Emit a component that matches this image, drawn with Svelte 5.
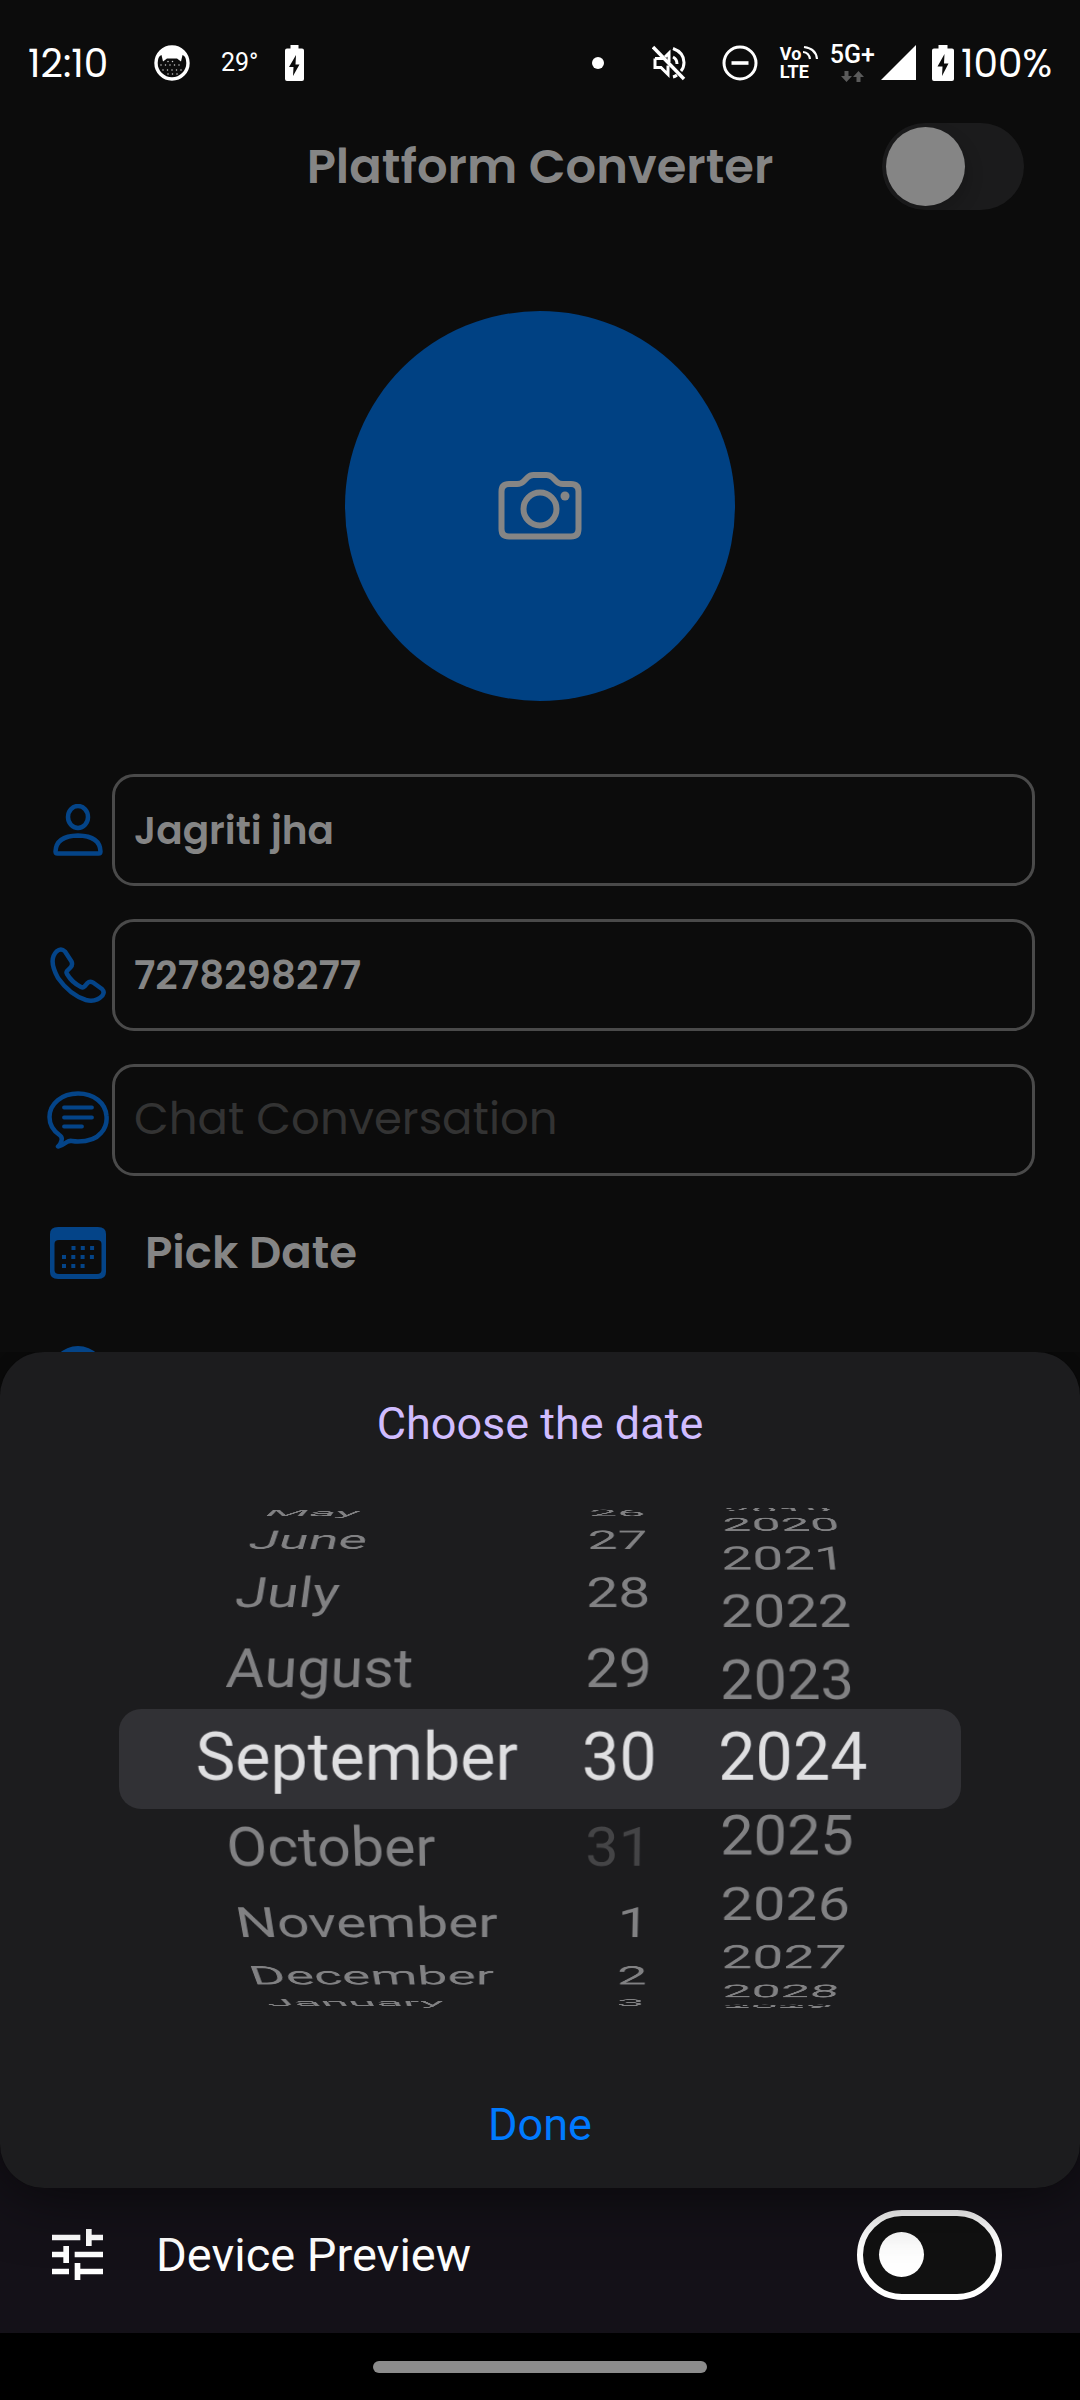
<script>
  let name = $state('Jagriti jha');
  let phone = $state('7278298277');
  let chat = $state('');
  let cupertino = $state(false);
  let preview = $state(false);

  const around = (labels, selected) =>
    labels.map((label, i) => ({ label, k: i - selected }));

  const wheels = [
    {
      id: 'month',
      step: 16.2,
      items: around(
        ['May', 'June', 'July', 'August', 'September', 'October', 'November', 'December', 'January'],
        4
      )
    },
    {
      id: 'day',
      step: 16.2,
      disabled: '31',
      items: around(['26', '27', '28', '29', '30', '31', '1', '2', '3'], 4)
    },
    {
      id: 'year',
      step: 14,
      items: around(
        ['2019', '2020', '2021', '2022', '2023', '2024', '2025', '2026', '2027', '2028', '2029'],
        5
      )
    }
  ];
</script>

<div class="device">
  <div class="stage">
    <div class="screen">
      <div class="status">
        <span class="time">12:10</span>
        <svg class="cat" width="36" height="36" viewBox="0 0 36 36">
          <circle cx="18" cy="18" r="16" fill="none" stroke="#fff" stroke-width="3.4" />
          <path fill="#fff" d="M4 12C6 5 11 2 18 2s12 3 14 10l-3.500-2-1.500 6.500-4-3h-10l-4 3L7.500 10z" />
          <path
            fill="none" stroke="#ccc" stroke-width="1.500" stroke-linecap="round" stroke-dasharray="0 4.500"
            d="M7 20h22M9 25h19M14 29h10M14 16.500h9"
          />
        </svg>
        <span class="temp">29°</span>
        <svg width="19" height="36" viewBox="0 0 19 36">
          <path fill="#fff" fill-rule="evenodd" d="M5.500 0h8v3.500H17q2 0 2 2V34q0 2-2 2H2q-2 0-2-2V5.500q0-2 2-2h3.500zM11 10 4 22h4.500L8 31l6.500-11.500H10.500z" />
        </svg>
        <span class="spacer"></span>
        <svg class="dot" width="12" height="12" viewBox="0 0 12 12"><circle cx="6" cy="6" r="6" fill="#fff" /></svg>
        <svg class="mute" width="34" height="36" viewBox="0 0 34 36" fill="none" stroke="#fff">
          <path stroke-width="3" d="M3 13.500v9h6l7 7v-9" />
          <path stroke-width="3" d="M3 13.500h9M17 17V8l-4 4M21 12q4 2 4 7M21 3.500q11 4 11 14 0 5-3 8.500M21 32q2-.5 4-2" />
          <path stroke-width="3.400" d="M1 2l31 32" />
        </svg>
        <svg class="dnd" width="36" height="36" viewBox="0 0 36 36" fill="none" stroke="#fff" stroke-width="3">
          <circle cx="18" cy="18" r="16" />
          <path stroke-width="3.600" d="M9.500 18h17" />
        </svg>
        <div class="volte">
          <div class="vo">
            Vo
            <svg width="16" height="15" viewBox="0 0 16 15" fill="none" stroke="#fff" stroke-width="2.200">
              <path d="M0 7q6 .5 7 7M1 2q12 1.500 13 12" />
            </svg>
          </div>
          <div>LTE</div>
        </div>
        <div class="net">
          <span>5G+</span>
          <svg width="23" height="11" viewBox="0 0 23 11" fill="#5a5a5a">
            <path d="M3.500 0h4v5h3.500L5.500 11 0 5h3.500zM15.500 11h4V6H23L17.500 0 12 6h3.500z" />
          </svg>
        </div>
        <svg class="signal" width="35" height="35" viewBox="0 0 35 35"><path fill="#fff" d="M35 0v35H0z" /></svg>
        <svg class="battery" width="22" height="36" viewBox="0 0 22 36">
          <path fill="#fff" fill-rule="evenodd" d="M6.500 0h9v3.500H20q2 0 2 2V34q0 2-2 2H2q-2 0-2-2V5.500q0-2 2-2h4.500zM12.500 9 5.500 21.500h5L10 31l6.500-12.500H12z" />
        </svg>
        <span class="percent">100%</span>
      </div>

      <header>
        <h1>Platform Converter</h1>
        <input class="ios-switch" type="checkbox" role="switch" aria-label="Platform" bind:checked={cupertino} />
      </header>

      <button class="photo" aria-label="Add photo">
        <svg width="84" height="68" viewBox="0 0 84 68" fill="none" stroke="#858585" stroke-width="6">
          <path stroke-linejoin="round" d="M11 12h8q4 0 6.500-2.500l4-4Q32 3 35.500 3h13Q52 3 54.500 5.500l4 4Q61 12 65 12h8q7.500 0 7.500 7.500V57q0 7.500-7.500 7.500H11q-7.500 0-7.500-7.500V19.500Q3.500 12 11 12z" />
          <circle cx="42" cy="37" r="16.500" />
          <circle cx="67" cy="24" r="4.500" fill="#858585" stroke="none" />
        </svg>
      </button>

      <form>
        <div class="row">
          <label for="name" aria-label="Full name">
            <svg width="50" height="52" viewBox="0 0 50 52" fill="none" stroke="#044488" stroke-width="4.500">
              <ellipse cx="25" cy="13" rx="10" ry="11" />
              <path stroke-linejoin="round" d="M4.500 49.500Q2.500 49.500 2.500 47.500 3 32 25 31.500 47 32 47.500 47.500 47.500 49.500 45.500 49.500z" />
            </svg>
          </label>
          <input id="name" type="text" bind:value={name} />
        </div>
        <div class="row">
          <label for="phone" aria-label="Phone number">
            <svg width="56" height="56" viewBox="0 0 56 56" fill="none" stroke="#044488" stroke-width="4.500" stroke-linejoin="round">
              <path d="M6.500 4.500Q11 .5 15 4.500L21.500 14.500Q23 18 20.500 20.500L17 24Q16 25.500 17 27 22 35.500 31 40 33 41 34.500 39.500L37.500 36Q39.500 34 43 35.500L52 42Q55 45 52.500 48.500 46 55.500 36 53 20 48 8 31-2 13 6.500 4.500z" />
            </svg>
          </label>
          <input id="phone" type="tel" bind:value={phone} />
        </div>
        <div class="row">
          <label for="chat" aria-label="Chat conversation">
            <svg width="62" height="58" viewBox="0 0 62 58" fill="none" stroke="#044488" stroke-width="4.500">
              <path stroke-linejoin="round" d="M31 2.500C15 2.500 2.500 12.500 2.500 26q0 11 10 18 3 2 2 5.500-.5 3-3.500 6 5-1.500 9-4.500 2-1.500 5-1 3 .5 6 .5 16 0 23-8.500Q60.500 35 59.500 25C58.500 12 47 2.500 31 2.500z" />
              <path stroke-width="3.800" stroke-linecap="round" d="M17 16.500h28M17 26.500h28M17 35.500h18" />
            </svg>
          </label>
          <input id="chat" type="text" placeholder="Chat Conversation" bind:value={chat} />
        </div>
        <button class="row pick" type="button">
          <span class="icon">
            <svg width="56" height="52" viewBox="0 0 56 52" fill="#044488">
              <path fill-rule="evenodd" d="M8 0h40q8 0 8 7v38q0 7-8 7H8q-8 0-8-7V7q0-7 8-7zM9 13q-4.500 0-4.500 4v26q0 4 4.500 4h38q4.500 0 4.500-4V17q0-4-4.500-4z" />
              <path stroke="#044488" stroke-width="4" stroke-dasharray="4 5.300" d="M21.500 21H45M12 30h33M12 39h23" />
            </svg>
          </span>
          Pick Date
        </button>
        <button class="row pick" type="button" aria-label="Pick time">
          <span class="icon">
            <svg width="56" height="56" viewBox="0 0 56 56">
              <circle cx="28" cy="28" r="28" fill="#044488" />
              <path fill="none" stroke="#0c0c0c" stroke-width="4" d="M28 13v15l11 8" />
            </svg>
          </span>
        </button>
      </form>
    </div>

    <section class="sheet" aria-label="Date picker">
      <h2>Choose the date</h2>
      <div class="picker">
        <div class="band"></div>
        <div class="wheels">
          {#each wheels as wheel (wheel.id)}
            <div class="wheel {wheel.id}" role="group" aria-label={wheel.id}>
              {#each wheel.items as item (item.label)}
                <button
                  class="item"
                  class:selected={item.k === 0}
                  disabled={item.label === wheel.disabled}
                  style="--turn: {-item.k * wheel.step}deg"
                >{item.label}</button>
              {/each}
            </div>
          {/each}
        </div>
      </div>
      <button class="done">Done</button>
    </section>
  </div>

  <label class="preview">
    <svg width="51" height="51" viewBox="3 3 18 18" fill="#fff">
      <path d="M3 17v2h6v-2H3zM3 5v2h10V5H3zm10 16v-2h8v-2h-8v-2h-2v6h2zM7 9v2H3v2h4v2h2V9H7zm14 4v-2H11v2h10zm-6-4h2V7h4V5h-4V3h-2v6z" />
    </svg>
    <span>Device Preview</span>
    <input class="switch" type="checkbox" role="switch" bind:checked={preview} />
  </label>
  <div class="nav"><div class="handle"></div></div>
</div>

<style>
  :global(body) {
    margin: 0;
    background: #000;
  }
  .device {
    display: flex;
    flex-direction: column;
    min-height: 100vh;
    background: #141118;
    font-family: Roboto, 'Noto Sans', sans-serif;
    color: #fff;
  }
  .device * {
    box-sizing: border-box;
  }
  svg {
    display: block;
    flex: none;
  }
  button {
    padding: 0;
    border: 0;
    background: none;
    font: inherit;
    color: inherit;
  }
  .stage {
    position: relative;
    z-index: 1;
    flex: 1;
    display: flex;
    flex-direction: column;
  }
  .screen {
    flex: 1;
    overflow: hidden;
    border-radius: 0 0 44px 44px;
    background: #0c0c0c;
    font-family: Poppins, Inter, sans-serif;
    color: #858585;
  }

  .status {
    display: flex;
    align-items: center;
    height: 123px;
    padding: 2px 28px 0;
    color: #fff;
    font-size: 39px;
    line-height: 40px;
  }
  .time {
    min-width: 82px;
  }
  .time,
  .percent {
    padding-top: 3px;
  }
  .cat {
    margin: 0 31px 0 44px;
  }
  .temp {
    width: 38px;
    margin-right: 26px;
    font-family: Roboto, sans-serif;
    font-size: 25px;
  }
  .spacer {
    flex: 1;
  }
  .mute {
    margin: 0 36px 0 48px;
  }
  .volte {
    width: 38px;
    margin: 0 12px 0 22px;
    font: 700 18px/18px Roboto, sans-serif;
  }
  .vo {
    display: flex;
    gap: 2px;
  }
  .net {
    display: flex;
    flex-direction: column;
    align-items: center;
    gap: 4px;
    margin-right: 6px;
    font: 500 25px/24px Roboto, sans-serif;
  }
  .battery {
    margin: 0 7px 0 16px;
  }

  header {
    display: grid;
    grid-template-columns: 1fr auto 1fr;
    align-items: center;
    padding: 0 56px;
  }
  h1 {
    grid-column: 2;
    margin: 0;
    font-size: 48px;
    font-weight: 600;
    line-height: 56px;
  }
  .ios-switch {
    appearance: none;
    justify-self: end;
    width: 142px;
    height: 87px;
    margin: 0;
    padding: 4px;
    border-radius: 44px;
    background: #1b1b1c;
    overflow: hidden;
  }
  .ios-switch::before {
    content: '';
    display: block;
    width: 79px;
    height: 79px;
    border-radius: 50%;
    background: #858585;
    box-shadow: 4px 8px 16px rgb(0 0 0 / 0.15);
  }
  .ios-switch:checked::before {
    margin-left: auto;
  }

  .photo {
    display: grid;
    place-items: center;
    width: 390px;
    height: 390px;
    margin: 101px auto 73px;
    border-radius: 50%;
    background: #004183;
  }

  form {
    display: flex;
    flex-direction: column;
    gap: 33px;
    padding: 0 45px 0 44px;
  }
  .row {
    display: flex;
    align-items: center;
  }
  .row label,
  .icon {
    display: flex;
    flex: none;
    justify-content: center;
    width: 68px;
  }
  .row input {
    flex: 1;
    min-width: 0;
    height: 112px;
    padding: 0 19px;
    border: 3px solid #4a4a4a;
    border-radius: 22px;
    background: none;
    font: 600 39px/48px Poppins, Inter, sans-serif;
    color: inherit;
  }
  .row input::placeholder {
    font-size: 45px;
    font-weight: 400;
    color: #333;
    opacity: 1;
  }
  .pick {
    gap: 33px;
    height: 88px;
    font-size: 45px;
    font-weight: 600;
  }

  .sheet {
    position: absolute;
    inset: auto 0 0;
    display: flex;
    flex-direction: column;
    align-items: center;
    padding: 48px 0 39px;
    border-radius: 44px;
    background: #1c1c1e;
    box-shadow: 0 0 68px rgb(0 0 0 / 0.7);
    clip-path: inset(0 0 -90px 0);
  }
  h2 {
    margin: 0;
    font-size: 45px;
    font-weight: 400;
    line-height: 48px;
    color: #d0bcff;
  }
  .picker {
    display: grid;
    align-self: stretch;
    align-items: center;
    height: 604px;
    margin: 9px 119px 40px;
  }
  .band,
  .wheels {
    grid-area: 1 / 1;
  }
  .band {
    height: 100px;
    border-radius: 22px;
    background: #313135;
  }
  .wheels {
    display: flex;
    padding: 0 0 3px 104px;
  }
  .wheel {
    display: grid;
    align-items: center;
    height: 600px;
    perspective: 930px;
  }
  .month {
    width: 340px;
    justify-items: start;
    perspective-origin: 255px 50%;
  }
  .day {
    width: 89px;
    justify-items: end;
    perspective-origin: 46px 50%;
  }
  .year {
    flex: 1;
    justify-items: start;
    padding-left: 68px;
    perspective-origin: 85px 50%;
  }
  .item {
    grid-area: 1 / 1;
    font-size: 60px;
    line-height: 80px;
    white-space: nowrap;
    color: #818183;
    transform: translateZ(-325px) rotateX(var(--turn)) translateZ(325px);
  }
  .item.selected {
    color: #dfdfe1;
    transform: translateZ(90px);
  }
  .item:disabled {
    color: #444446;
  }
  .done {
    font-size: 45px;
    line-height: 48px;
    color: #007aff;
  }

  .preview {
    display: flex;
    align-items: center;
    height: 145px;
    padding: 0 78px 12px 52px;
    font-size: 47px;
  }
  .preview span {
    flex: 1;
    padding-left: 53px;
  }
  .switch {
    appearance: none;
    display: flex;
    align-items: center;
    width: 145px;
    height: 90px;
    margin: 0;
    padding: 0 16px;
    border: 6px solid #fff;
    border-radius: 45px;
    background: #111;
  }
  .switch::before {
    content: '';
    width: 45px;
    height: 45px;
    border-radius: 50%;
    background: #fff;
  }
  .switch:checked::before {
    margin-left: auto;
  }
  .nav {
    display: flex;
    align-items: center;
    justify-content: center;
    height: 67px;
    background: #000;
  }
  .handle {
    width: 31%;
    height: 12px;
    border-radius: 6px;
    background: #8c8c8c;
  }
</style>
